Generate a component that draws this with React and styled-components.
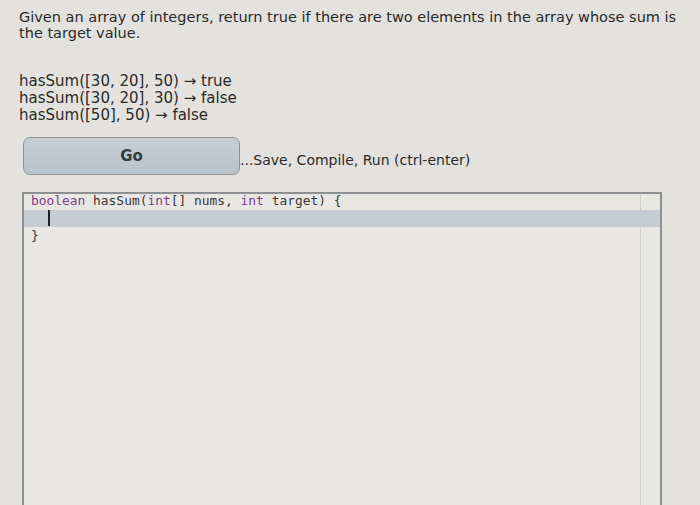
import React from 'react'
import styled, { createGlobalStyle } from 'styled-components'

const GlobalStyle = createGlobalStyle`
  html, body {
    margin: 0;
    padding: 0;
    background: #e4e2de;
    height: 100%;
    overflow: hidden;
  }
`

const Page = styled.div`
  font-family: 'DejaVu Sans', Verdana, sans-serif;
  color: #2a2a2a;
  padding: 9px 0 0 19px;
  height: 505px;
  box-sizing: border-box;
`

const Prompt = styled.p`
  margin: 0;
  font-size: 14.5px;
  line-height: 16px;
  width: 660px;
`

const Examples = styled.div`
  margin-top: 32px;
  font-size: 15px;
  line-height: 17px;
`

const ActionRow = styled.div`
  display: flex;
  align-items: center;
  margin-top: 13px;
  margin-left: 4px;
`

const GoButton = styled.button`
  width: 217px;
  height: 38px;
  border: 1px solid #8b9299;
  border-radius: 7px;
  background: linear-gradient(#c6ced6, #b9c3cc);
  font-family: 'DejaVu Sans', Verdana, sans-serif;
  font-size: 15px;
  font-weight: bold;
  color: #333a40;
  padding: 0;
`

const Hint = styled.span`
  font-size: 14px;
  margin-top: 8px;
`

const Editor = styled.div`
  margin: 17px 0 0 3px;
  width: 640px;
  height: 320px;
  border: 2px solid #8d9092;
  border-bottom: none;
  box-sizing: border-box;
  background: #e9e7e3;
  position: relative;
  font-family: 'DejaVu Sans Mono', Menlo, monospace;
  font-size: 12.9px;
`

const Margin = styled.div`
  position: absolute;
  top: 0;
  bottom: 0;
  left: 616px;
  border-left: 1px solid #cfcfcc;
`

const CodeLine = styled.div`
  height: ${p => (p.$first ? '16px' : '17px')};
  line-height: ${p => (p.$first ? '13px' : '17px')};
  padding-left: 7px;
  white-space: pre;
  color: #383838;
  background: ${p => (p.$active ? '#c7ccd2' : 'transparent')};
  position: relative;
`

const Kw = styled.span`
  color: #7b3f8c;
`

const Cursor = styled.span`
  display: inline-block;
  width: 2px;
  height: 16px;
  background: #222;
  vertical-align: top;
  margin-left: 1px;
`

export default function App() {
  return (
    <>
      <GlobalStyle />
      <Page>
        <Prompt>
          Given an array of integers, return true if there are two elements in the array whose sum is the target value.
        </Prompt>
        <Examples>
          <div>hasSum([30, 20], 50) → true</div>
          <div>hasSum([30, 20], 30) → false</div>
          <div>hasSum([50], 50) → false</div>
        </Examples>
        <ActionRow>
          <GoButton>Go</GoButton>
          <Hint>...Save, Compile, Run (ctrl-enter)</Hint>
        </ActionRow>
        <Editor>
          <Margin />
          <CodeLine $first>
            <Kw>boolean</Kw> hasSum(<Kw>int</Kw>[] nums, <Kw>int</Kw> target) {'{'}
          </CodeLine>
          <CodeLine $active>
            {'  '}<Cursor />
          </CodeLine>
          <CodeLine>{'}'}</CodeLine>
        </Editor>
      </Page>
    </>
  )
}
